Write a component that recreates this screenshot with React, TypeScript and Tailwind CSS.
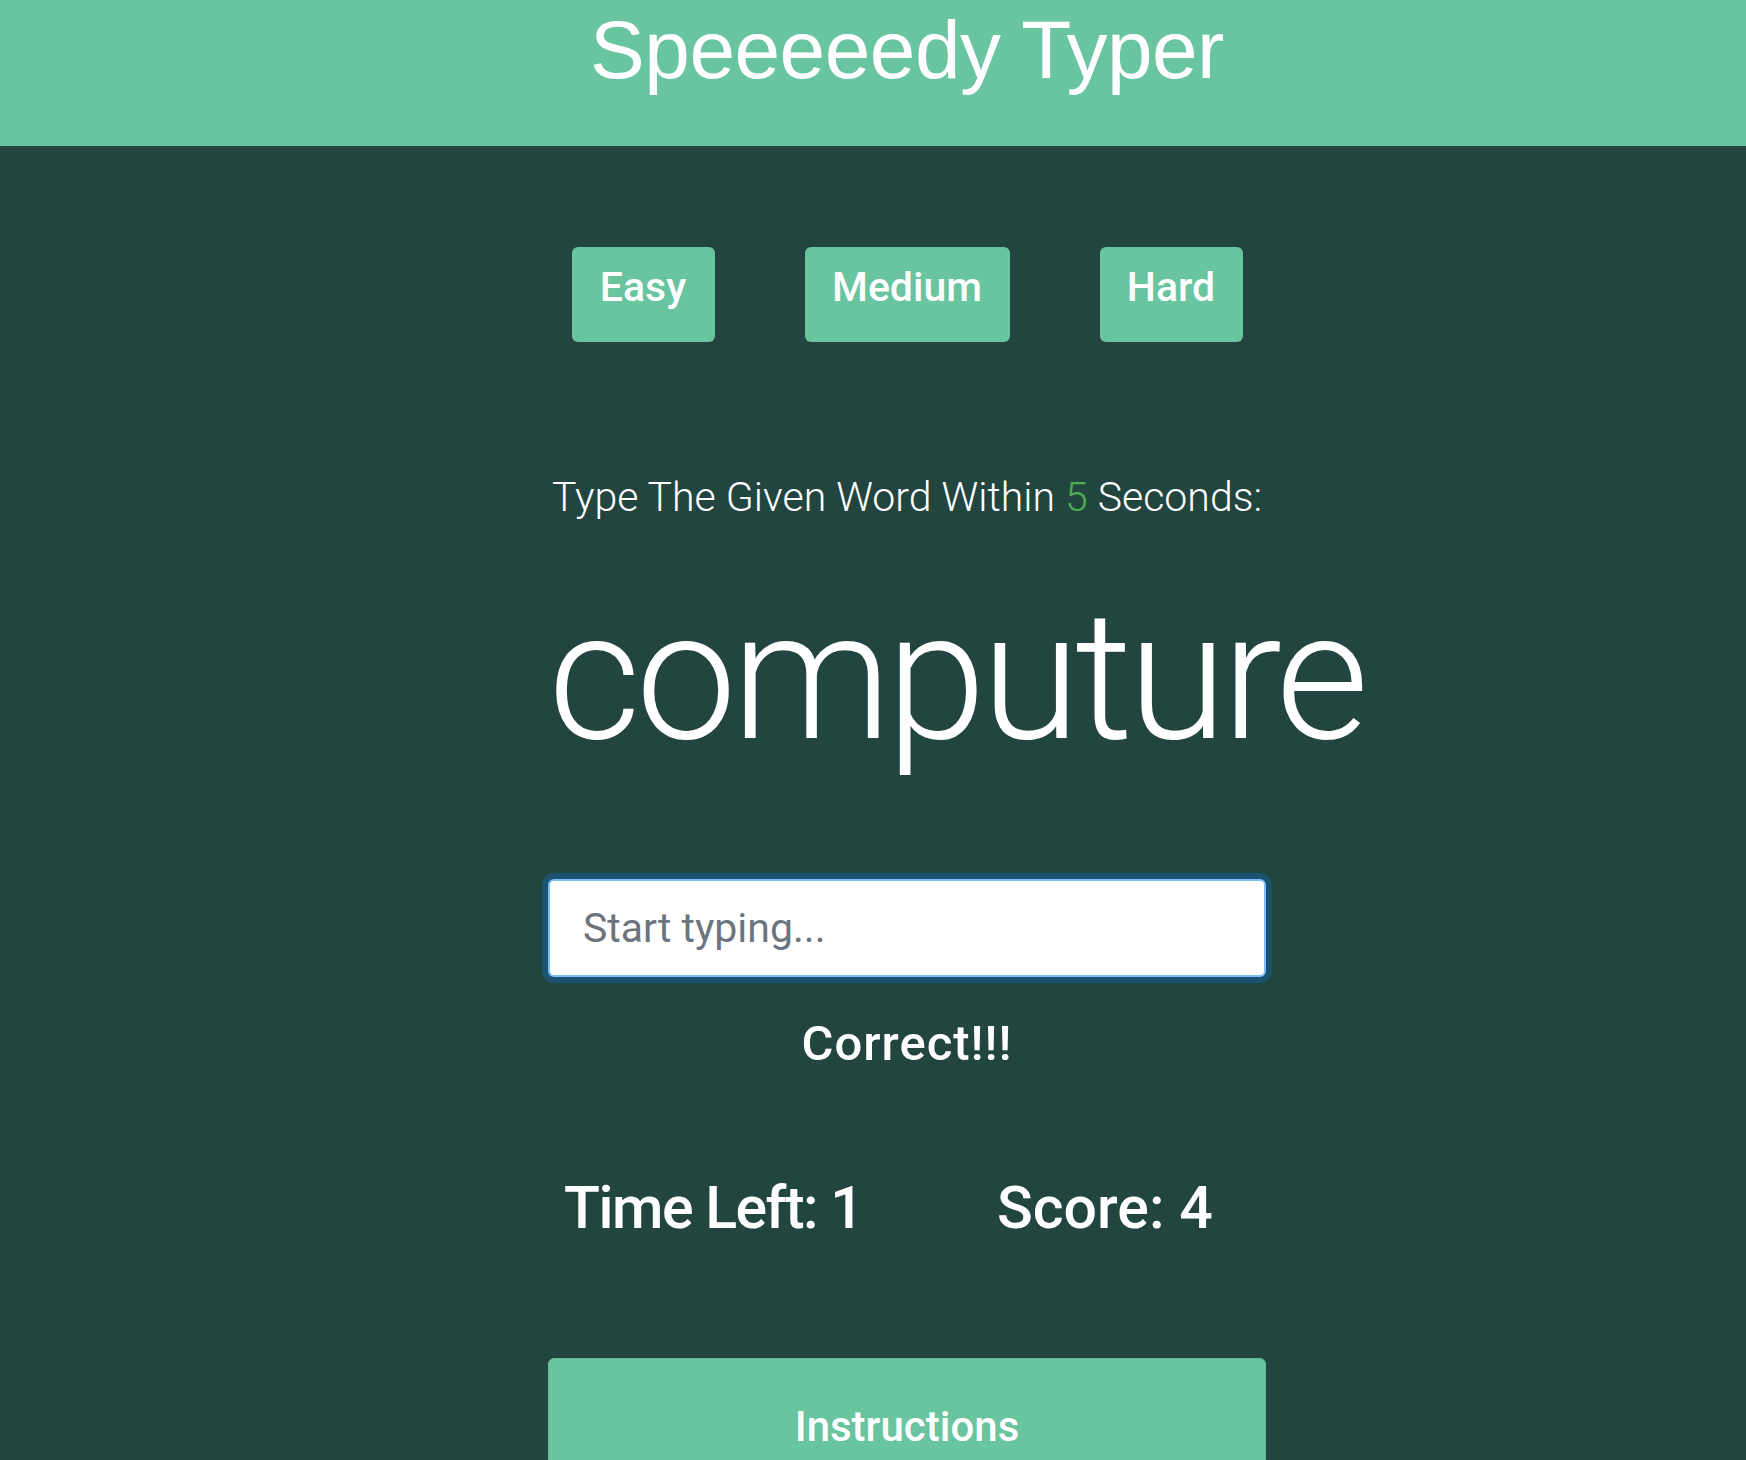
import { useState } from 'react';

const levels = [
  { key: 'easy', label: 'Easy', width: 'w-[143px]' },
  { key: 'medium', label: 'Medium', width: 'w-[205px]' },
  { key: 'hard', label: 'Hard', width: 'w-[143px]' },
];

const App = () => {
  const [typed, setTyped] = useState('');

  return (
    <div className="h-[1460px] overflow-hidden bg-[#23453f] font-['Roboto','Liberation_Sans',sans-serif] text-white">
      <header className="h-[146px] bg-[#69c4a0] pt-[9px] pl-[68px]">
        <h1 className="text-center font-['Liberation_Sans','Arial',sans-serif] text-[82px] leading-[82px] tracking-[-0.5px]">
          Speeeeedy Typer
        </h1>
      </header>

      <main className="flex flex-col items-center pl-[68px]">
        <div className="mt-[101px] flex gap-[90px]">
          {levels.map((level) => (
            <button
              key={level.key}
              className={`${level.width} h-[95px] rounded-md bg-[#69c4a0] pt-[20px] text-[41px] leading-none font-medium text-white self-start flex justify-center`}
            >
              {level.label}
            </button>
          ))}
        </div>

        <p className="mt-[135px] text-[41px] leading-none font-light">
          Type The Given Word Within <span className="text-[#4caf50]">5</span> Seconds:
        </p>

        <div className="flex w-[718px] flex-col">
          <h2 className="mt-[69px] whitespace-nowrap text-left text-[180px] leading-none font-light tracking-[-5px]">
            computure
          </h2>

          <input
            autoFocus
            value={typed}
            onChange={(e) => setTyped(e.target.value)}
            placeholder="Start typing..."
            className="mt-[112px] h-[98px] w-full rounded-md border-2 border-[#80bdff] bg-white px-[33px] text-[41px] text-[#495057] placeholder:text-[#6c757d] caret-[#495057] outline-none shadow-[0_0_0_6px_rgba(0,123,255,0.25)]"
          />

          <h3 className="mt-[42px] text-center text-[49px] leading-none font-medium tracking-[1px]">
            Correct!!!
          </h3>

          <div className="mt-[110px] flex pl-[16px] text-[59px] leading-none font-medium">
            <span className="w-[433px] tracking-[-1.5px]">Time Left: 1</span>
            <span>Score: 4</span>
          </div>

          <button className="mt-[121px] h-[136px] w-full rounded-md border border-[#5fb893] bg-[#69c4a0] pt-[47px] text-[42px] leading-none font-medium text-white flex justify-center">
            Instructions
          </button>
        </div>
      </main>
    </div>
  );
};

export default App;
